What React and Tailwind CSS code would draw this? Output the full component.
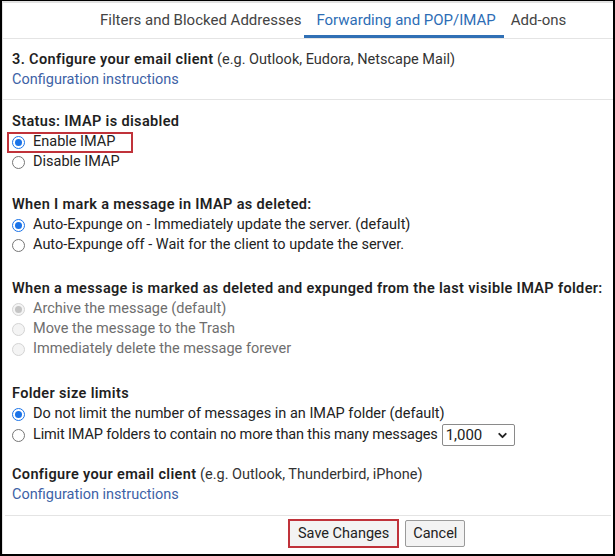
import React from "react";
import { ChevronDown } from "lucide-react";

// ================= RADIO ROW =================
const Radio = ({ checked, disabled, children }) => (
  <label
    className={`flex items-center h-5 ${
      disabled ? "text-[#6e6e6e]" : "text-[#222]"
    }`}
  >
    <span
      className={`flex items-center justify-center w-[13px] h-[13px] rounded-full border ${
        disabled
          ? "border-[#d4d4d4] bg-[#f4f4f4]"
          : checked
          ? "border-[#1a73e8]"
          : "border-[#767676]"
      }`}
    >
      {checked && (
        <span
          className={`w-[7px] h-[7px] rounded-full ${
            disabled ? "bg-[#c4c4c4]" : "bg-[#1a73e8]"
          }`}
        />
      )}
    </span>
    <span className="ml-[8px]">{children}</span>
  </label>
);

const Heading = ({ children, note }) => (
  <p className="h-5 leading-5 text-[#1f1f1f] whitespace-nowrap">
    <span className="font-semibold tracking-[0.35px]">{children}</span>
    {note && <span className="text-[#333]"> {note}</span>}
  </p>
);

const App = () => {
  return (
    <div
      className="w-[615px] h-[556px] bg-white border-t border-l-2 border-r-2 border-b-2 border-black text-[14.5px] overflow-hidden"
      style={{ fontFamily: "Roboto, 'Liberation Sans', sans-serif" }}
    >
      <div className="h-full border-t-2 border-l border-[#e2e2e2]">
        {/* ===== TABS ===== */}
        <div className="flex h-[36px] border-b border-[#e4e4e4] pl-[90px] text-[15px]">
          <div className="pl-[7px] pr-[3px] flex items-center text-[#444]">
            Filters and Blocked Addresses
          </div>
          <div className="pl-[12px] pr-[8px] flex items-center text-[#2d6db5] border-b-[3px] border-[#3070b5] pt-[3px]">
            Forwarding and POP/IMAP
          </div>
          <div className="pl-[7px] flex items-center text-[#444]">
            Add-ons
          </div>
        </div>

        {/* ===== CLIENT ===== */}
        <div className="pl-[9px] pt-[11px] pb-[9px] border-b border-[#e4e4e4]">
          <Heading note="(e.g. Outlook, Eudora, Netscape Mail)">
            3. Configure your email client
          </Heading>
          <p className="h-5 leading-5 text-[#3d62a6]">Configuration instructions</p>
        </div>

        {/* ===== IMAP ===== */}
        <div className="pl-[9px] pt-[12px] pr-[8px]">
          <Heading>Status: IMAP is disabled</Heading>
          <div className="relative">
            <Radio checked>Enable IMAP</Radio>
            <div className="absolute left-[-5px] top-0 w-[126px] h-[21px] border-2 border-[#c0323a]" />
          </div>
          <Radio>Disable IMAP</Radio>

          <div className="mt-[23px]">
            <Heading>When I mark a message in IMAP as deleted:</Heading>
            <Radio checked>
              Auto-Expunge on - Immediately update the server. (default)
            </Radio>
            <Radio>Auto-Expunge off - Wait for the client to update the server.</Radio>
          </div>

          <div className="mt-[24px]">
            <Heading>
              When a message is marked as deleted and expunged from the last visible IMAP folder:
            </Heading>
            <Radio checked disabled>Archive the message (default)</Radio>
            <Radio disabled>Move the message to the Trash</Radio>
            <Radio disabled>Immediately delete the message forever</Radio>
          </div>

          <div className="mt-[25px]">
            <Heading>Folder size limits</Heading>
            <Radio checked>
              Do not limit the number of messages in an IMAP folder (default)
            </Radio>
            <div className="flex items-center h-[22px] tracking-[-0.15px]">
              <Radio>Limit IMAP folders to contain no more than this many messages</Radio>
              <div className="ml-[4px] flex items-center justify-between w-[73px] h-[22px] border border-[#8a8a8a] rounded-[2px] pl-[3px] pr-[5px] text-[15px] tracking-normal text-[#222]">
                <span>1,000</span>
                <ChevronDown size={13} strokeWidth={3.5} className="text-[#222]" />
              </div>
            </div>
          </div>

          <div className="mt-[19px] pb-[10px]">
            <Heading note="(e.g. Outlook, Thunderbird, iPhone)">
              Configure your email client
            </Heading>
            <p className="h-5 leading-5 text-[#3d62a6]">Configuration instructions</p>
          </div>
        </div>

        {/* ===== ACTIONS ===== */}
        <div className="border-t border-[#e4e4e4] mx-[2px] pt-[3px] pl-[283px] flex items-center gap-[6px]">
          <button className="h-[29px] px-[8px] border-2 border-[#c0323a] bg-[#f3f3f3] text-[14.5px] text-[#222]">
            Save Changes
          </button>
          <button className="h-[27px] px-[7px] border border-[#9a9a9a] rounded-[2px] bg-[#f3f3f3] text-[14.5px] text-[#222]">
            Cancel
          </button>
        </div>
      </div>
    </div>
  );
};

export default App;
